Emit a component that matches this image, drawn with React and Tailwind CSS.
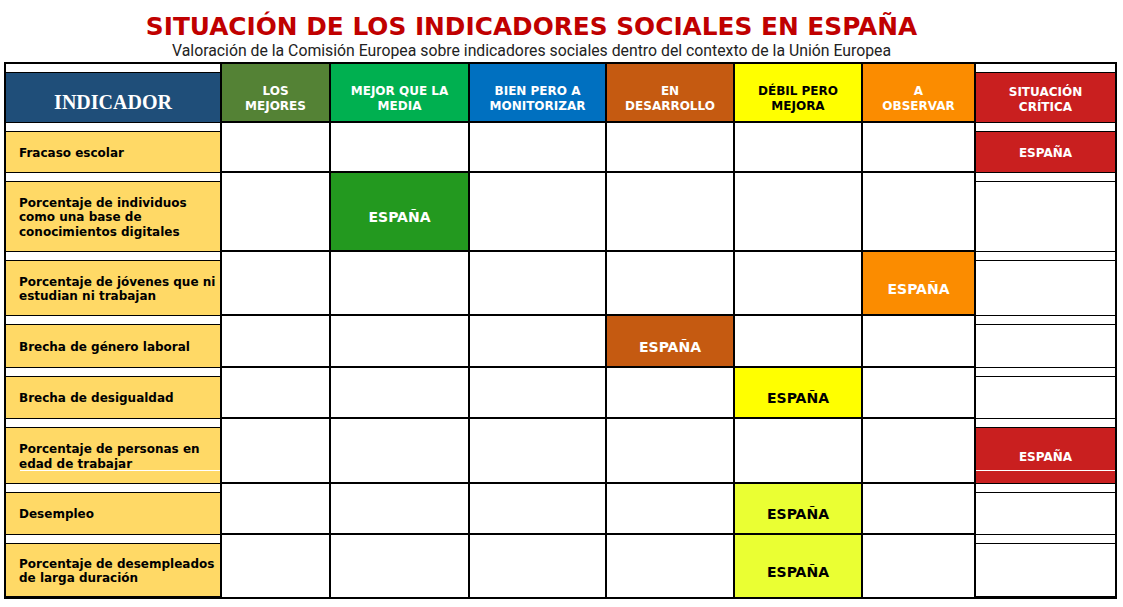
import React from 'react'

const colWidths = [216, 109, 139, 137, 128, 128, 113, 139]

const headers = [
  { lines: ['LOS', 'MEJORES'], bg: 'bg-[#548235]', text: 'text-white' },
  { lines: ['MEJOR QUE LA', 'MEDIA'], bg: 'bg-[#00b050]', text: 'text-white' },
  { lines: ['BIEN PERO A', 'MONITORIZAR'], bg: 'bg-[#0070c0]', text: 'text-white' },
  { lines: ['EN', 'DESARROLLO'], bg: 'bg-[#c55a11]', text: 'text-white' },
  { lines: ['DÉBIL PERO', 'MEJORA'], bg: 'bg-[#ffff00]', text: 'text-black' },
  { lines: ['A', 'OBSERVAR'], bg: 'bg-[#fb8c00]', text: 'text-white' }
]

const rows = [
  { lines: ['Fracaso escolar'], col: 7, fill: 'bg-[#c91f1f]', text: 'text-white' },
  { lines: ['Porcentaje de individuos', 'como una base de', 'conocimientos digitales'], col: 2, fill: 'bg-[#23991f]', text: 'text-white' },
  { lines: ['Porcentaje de jóvenes que ni', 'estudian ni trabajan'], col: 6, fill: 'bg-[#fb8c00]', text: 'text-white' },
  { lines: ['Brecha de género laboral'], col: 4, fill: 'bg-[#c55a11]', text: 'text-white' },
  { lines: ['Brecha de desigualdad'], col: 5, fill: 'bg-[#ffff00]', text: 'text-black' },
  { lines: ['Porcentaje de personas en', 'edad de trabajar'], col: 7, fill: 'bg-[#c91f1f]', text: 'text-white', streak: true },
  { lines: ['Desempleo'], col: 5, fill: 'bg-[#eaff33]', text: 'text-black' },
  { lines: ['Porcentaje de desempleados', 'de larga duración'], col: 5, fill: 'bg-[#eaff33]', text: 'text-black' }
]

const verdana = { fontFamily: '"DejaVu Sans", Verdana, sans-serif' }

function SideCell({ children, boxClass, right, streak }) {
  return (
    <div className={`flex flex-col border-b border-black ${right ? '' : 'border-r-2'}`}>
      <div className="h-[9px] shrink-0 border-b border-black bg-white" />
      <div className={`relative flex-1 ${boxClass}`}>
        {children}
        {streak && <div className={`absolute bottom-[12px] right-0 h-px bg-white ${right ? 'left-0' : 'left-[14px]'}`} />}
      </div>
    </div>
  )
}

export default function App() {
  return (
    <div className="w-[1123px] h-[607px] bg-white overflow-hidden">
      <div className="pr-[60px] text-center">
        <h1 className="pt-[12px] text-[24.8px] leading-[30px] font-bold text-[#c00000]" style={verdana}>
          SITUACIÓN DE LOS INDICADORES SOCIALES EN ESPAÑA
        </h1>
        <p className="text-[15.8px] leading-[18px] text-[#222]" style={{ fontFamily: 'Roboto, sans-serif' }}>
          Valoración de la Comisión Europea sobre indicadores sociales dentro del contexto de la Unión Europea
        </p>
      </div>

      <div
        className="ml-[4px] mt-[2px] grid w-max border-2 border-black"
        style={{
          ...verdana,
          gridTemplateColumns: colWidths.map(w => `${w}px`).join(' '),
          gridTemplateRows: '59px 50px 79px 64px 52px 51px 65px 51px 62px'
        }}
      >
        {/* header row */}
        <SideCell boxClass="flex items-center justify-center bg-[#1f4e79] pt-[8px]">
          <span className="text-[20px] font-bold text-white" style={{ fontFamily: '"Liberation Serif", serif' }}>INDICADOR</span>
        </SideCell>
        {headers.map((h, i) => (
          <div
            key={i}
            className={`flex flex-col items-center justify-center border-r-2 border-b-2 border-black pt-[12px] text-[12px] leading-[15px] font-bold ${h.bg} ${h.text}`}
          >
            {h.lines.map(l => <span key={l}>{l}</span>)}
          </div>
        ))}
        <SideCell right boxClass="flex flex-col items-center justify-center bg-[#c91f1f] pt-[5px] text-[12px] leading-[15px] font-bold text-white">
          <span>SITUACIÓN</span>
          <span>CRÍTICA</span>
        </SideCell>

        {/* body rows */}
        {rows.map((r, ri) => (
          <React.Fragment key={ri}>
            <SideCell boxClass="flex flex-col justify-center bg-[#ffd966] pt-[2px] pl-[13px] text-[12px] leading-[14.5px] font-bold text-black" streak={r.streak}>
              {r.lines.map(l => <span key={l} className="whitespace-nowrap">{l}</span>)}
            </SideCell>
            {[1, 2, 3, 4, 5, 6].map(c => (
              <div
                key={c}
                className={`flex items-center justify-center pt-[12px] border-black border-r-2 ${ri === rows.length - 1 ? '' : 'border-b-2'} ${r.col === c ? r.fill : 'bg-white'} ${r.col === c ? r.text : ''} text-[14px] font-bold`}
              >
                {r.col === c && 'ESPAÑA'}
              </div>
            ))}
            <SideCell
              right
              streak={r.streak}
              boxClass={`flex items-center justify-center pt-[2px] text-[12px] font-bold ${r.col === 7 ? 'bg-[#c91f1f] text-white' : 'bg-white'}`}
            >
              {r.col === 7 && 'ESPAÑA'}
            </SideCell>
          </React.Fragment>
        ))}
      </div>
    </div>
  )
}
